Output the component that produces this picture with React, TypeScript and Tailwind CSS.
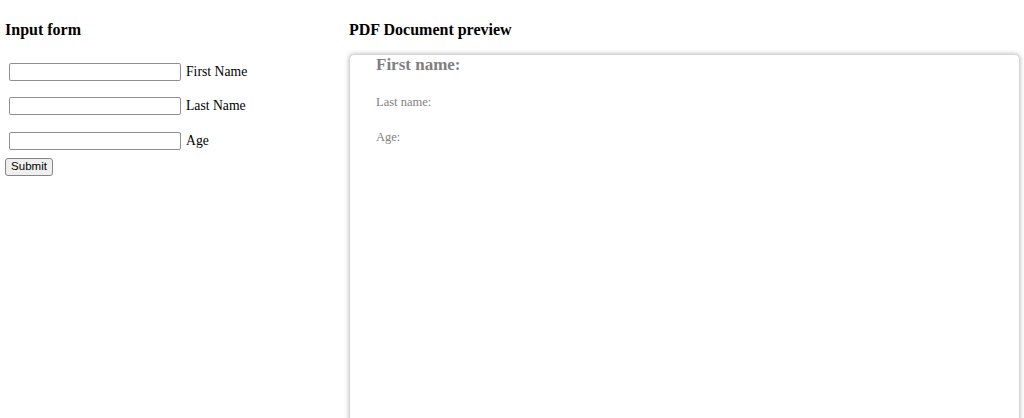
import React from "react";

const serif = "font-['Liberation_Serif','Times_New_Roman',serif]";

function Row({ label, className }: { label: string; className: string }) {
  return (
    <div className={`flex items-center ${className}`}>
      <input
        type="text"
        className="ml-[4px] h-[18px] w-[172px] rounded-[2px] border border-[#8f8f8f] bg-white px-[2px] text-[12px] outline-none"
      />
      <span className="ml-[5px] text-[13.7px] leading-[18px] text-black">{label}</span>
    </div>
  );
}

export default function App() {
  return (
    <div className={`flex h-[418px] w-[1024px] overflow-hidden bg-white pl-[5px] ${serif}`}>
      <div className="w-[344px] shrink-0">
        <h3 className="mt-[20px] text-[16px] font-bold leading-[20px] text-black">Input form</h3>
        <Row label="First Name" className="mt-[23px]" />
        <Row label="Last Name" className="mt-[16px]" />
        <Row label="Age" className="mt-[17px]" />
        <button
          type="button"
          className="mt-[8px] flex h-[18px] w-[48px] items-center justify-center rounded-[3px] border border-[#858585] bg-[#efefef] font-['Liberation_Sans',Arial,sans-serif] text-[11.5px] leading-none text-black"
        >
          Submit
        </button>
      </div>
      <div className="flex flex-1 flex-col pr-[4px]">
        <h3 className="mt-[20px] text-[16px] font-bold leading-[20px] text-black">PDF Document preview</h3>
        <div className="mt-[14px] h-[400px] w-[671px] shrink-0 rounded-[5px] border border-[#d6d6d6] bg-white pl-[26px] shadow-[0_0_5px_rgba(0,0,0,0.28)]">
          <div className="mt-[0px] text-[17px] font-bold leading-[20px] text-[#7f7f7f]">First name:</div>
          <div className="mt-[20px] text-[12.5px] leading-[15px] text-[#7f7f7f]">Last name:</div>
          <div className="mt-[20px] text-[12.5px] leading-[15px] text-[#7f7f7f]">Age:</div>
        </div>
      </div>
    </div>
  );
}
